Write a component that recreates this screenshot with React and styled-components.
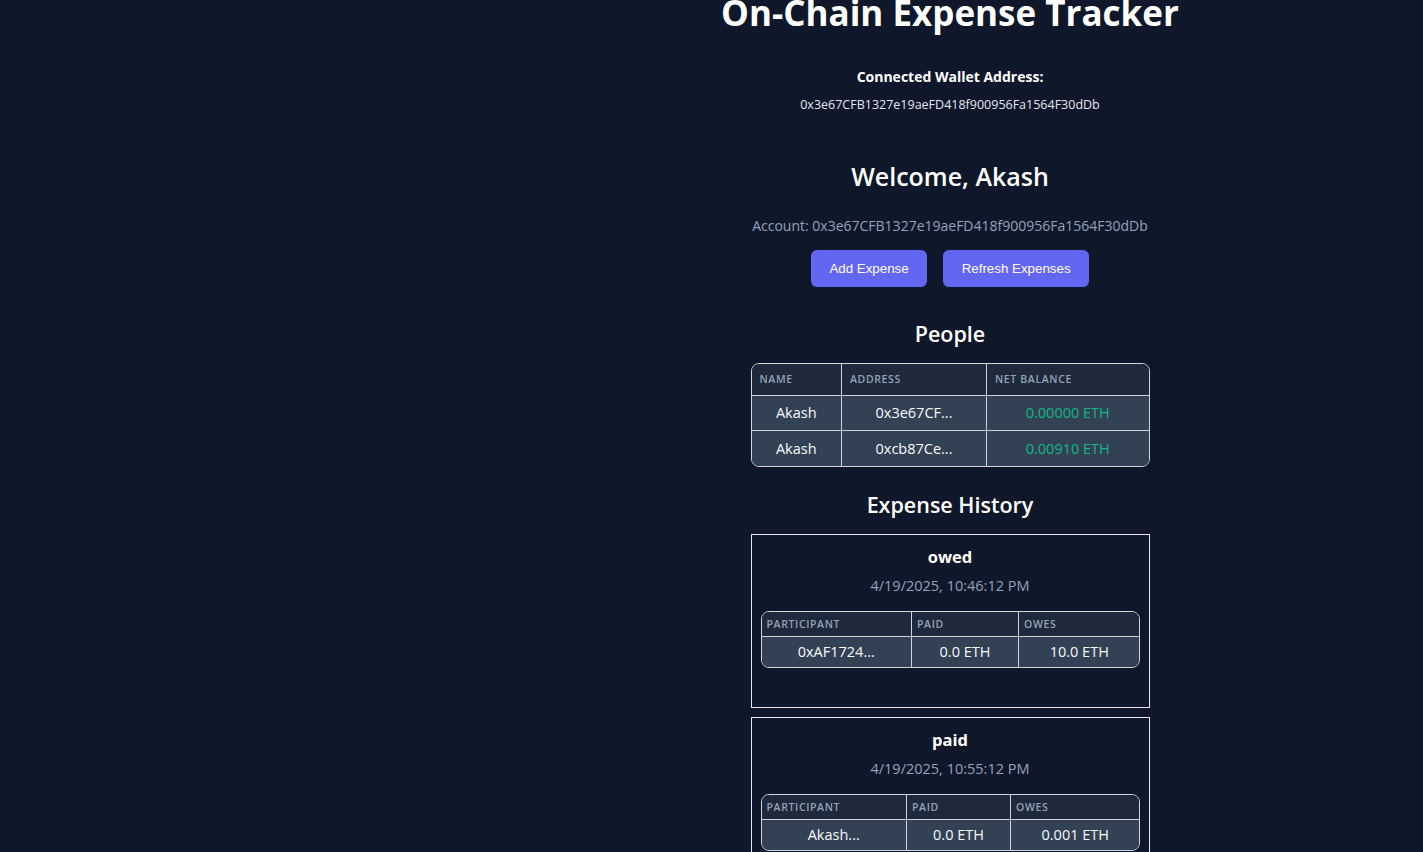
import React from "react";
import styled, { createGlobalStyle } from "styled-components";

const Global = createGlobalStyle`
  html, body { margin: 0; padding: 0; background: #0f172a; }
  body { font-family: "Open Sans", "Noto Sans", sans-serif; color: #f8fafc; overflow: hidden; }
`;

const Page = styled.div`
  min-height: 852px;
  display: flex;
  flex-direction: column;
  align-items: center;
  padding-left: 477px;
  text-align: center;
`;

const Title = styled.h1`
  margin: -9px 0 0;
  font-size: 35px;
  line-height: 44px;
  font-weight: 700;
  color: #ffffff;
  white-space: nowrap;
`;

const WalletLabel = styled.div`
  margin-top: 32px;
  font-size: 14px;
  line-height: 20px;
  font-weight: 700;
  color: #ffffff;
`;

const WalletAddr = styled.div`
  margin-top: 9px;
  font-size: 12.5px;
  line-height: 18px;
  color: #e2e8f0;
`;

const Welcome = styled.h2`
  margin: 46px 0 0;
  font-size: 25px;
  line-height: 32px;
  font-weight: 600;
  color: #ffffff;
`;

const Account = styled.p`
  margin: 24px 0 0;
  font-size: 14px;
  line-height: 20px;
  color: #94a3b8;
`;

const Actions = styled.div`
  margin-top: 14px;
  display: flex;
  gap: 16px;
`;

const Button = styled.button`
  height: 37px;
  padding: 0 18.5px;
  border: none;
  border-radius: 6px;
  background: #6366f1;
  color: #ffffff;
  font-family: "Liberation Sans", Arial, sans-serif;
  font-size: 13.333px;
  cursor: pointer;
`;

const SectionTitle = styled.h3`
  margin: ${(p) => p.$mt}px 0 0;
  font-size: 21.5px;
  line-height: 28px;
  font-weight: 600;
  color: #ffffff;
`;

const TableWrap = styled.div`
  margin-top: ${(p) => p.$mt}px;
  width: ${(p) => p.$w}px;
  border: 1px solid #d1d5db;
  border-radius: 8px;
  overflow: hidden;
  box-sizing: border-box;
`;

const Table = styled.table`
  width: 100%;
  border-collapse: collapse;
  table-layout: fixed;
`;

const Th = styled.th`
  width: ${(p) => p.$w}px;
  height: ${(p) => p.$h}px;
  padding: 0 0 0 ${(p) => p.$pl}px;
  background: #1e293b;
  color: #94a3b8;
  font-size: 10.5px;
  font-weight: 600;
  letter-spacing: 0.06em;
  text-transform: uppercase;
  text-align: left;
  border-bottom: 1px solid #d1d5db;
  border-right: 1px solid #d1d5db;
  box-sizing: border-box;
  &:last-child { border-right: none; }
`;

const Td = styled.td`
  height: ${(p) => p.$h}px;
  padding: 0;
  background: #334155;
  color: ${(p) => (p.$green ? "#10b981" : "#f8fafc")};
  font-size: 14.5px;
  font-weight: ${(p) => (p.$green ? 500 : 400)};
  text-align: center;
  border-bottom: 1px solid #d1d5db;
  border-right: 1px solid #d1d5db;
  box-sizing: border-box;
  &:last-child { border-right: none; }
  tr:last-child & { border-bottom: none; }
`;

const Cards = styled.div`
  margin-top: 15px;
  display: flex;
  flex-direction: column;
  gap: 9px;
`;

const Card = styled.div`
  width: 399px;
  box-sizing: border-box;
  border: 1px solid #e5e7eb;
  padding: 11px 9px 39px;
  display: flex;
  flex-direction: column;
  align-items: center;
`;

const CardTitle = styled.div`
  font-size: 16.5px;
  line-height: 22px;
  font-weight: 700;
  color: #ffffff;
`;

const CardDate = styled.div`
  margin-top: 8px;
  font-size: 14.5px;
  line-height: 20px;
  color: #94a3b8;
`;

const people = [
  { name: "Akash", addr: "0x3e67CF...", bal: "0.00000 ETH", h: 35 },
  { name: "Akash", addr: "0xcb87Ce...", bal: "0.00910 ETH", h: 36 },
];

const expenses = [
  {
    title: "owed",
    date: "4/19/2025, 10:46:12 PM",
    cols: [150, 107, 121],
    rows: [["0xAF1724...", "0.0 ETH", "10.0 ETH"]],
  },
  {
    title: "paid",
    date: "4/19/2025, 10:55:12 PM",
    cols: [145, 104, 129],
    rows: [["Akash...", "0.0 ETH", "0.001 ETH"]],
  },
];

export default function App() {
  return (
    <>
      <Global />
      <Page>
        <Title>On-Chain Expense Tracker</Title>
        <WalletLabel>Connected Wallet Address:</WalletLabel>
        <WalletAddr>0x3e67CFB1327e19aeFD418f900956Fa1564F30dDb</WalletAddr>
        <Welcome>Welcome, Akash</Welcome>
        <Account>Account: 0x3e67CFB1327e19aeFD418f900956Fa1564F30dDb</Account>
        <Actions>
          <Button>Add Expense</Button>
          <Button>Refresh Expenses</Button>
        </Actions>
        <SectionTitle $mt={33}>People</SectionTitle>
        <TableWrap $mt={15} $w={399}>
          <Table>
            <thead>
              <tr>
                <Th $w={90} $h={31} $pl={8}>Name</Th>
                <Th $w={145} $h={31} $pl={8}>Address</Th>
                <Th $w={162} $h={31} $pl={8}>Net Balance</Th>
              </tr>
            </thead>
            <tbody>
              {people.map((p, i) => (
                <tr key={i}>
                  <Td $h={p.h}>{p.name}</Td>
                  <Td $h={p.h}>{p.addr}</Td>
                  <Td $h={p.h} $green>{p.bal}</Td>
                </tr>
              ))}
            </tbody>
          </Table>
        </TableWrap>
        <SectionTitle $mt={24}>Expense History</SectionTitle>
        <Cards>
          {expenses.map((e, i) => (
            <Card key={i}>
              <CardTitle>{e.title}</CardTitle>
              <CardDate>{e.date}</CardDate>
              <TableWrap $mt={15} $w={379}>
                <Table>
                  <thead>
                    <tr>
                      <Th $w={e.cols[0]} $h={24} $pl={5}>Participant</Th>
                      <Th $w={e.cols[1]} $h={24} $pl={5}>Paid</Th>
                      <Th $w={e.cols[2]} $h={24} $pl={5}>Owes</Th>
                    </tr>
                  </thead>
                  <tbody>
                    {e.rows.map((r, j) => (
                      <tr key={j}>
                        {r.map((c, k) => (
                          <Td key={k} $h={31}>{c}</Td>
                        ))}
                      </tr>
                    ))}
                  </tbody>
                </Table>
              </TableWrap>
            </Card>
          ))}
        </Cards>
      </Page>
    </>
  );
}
